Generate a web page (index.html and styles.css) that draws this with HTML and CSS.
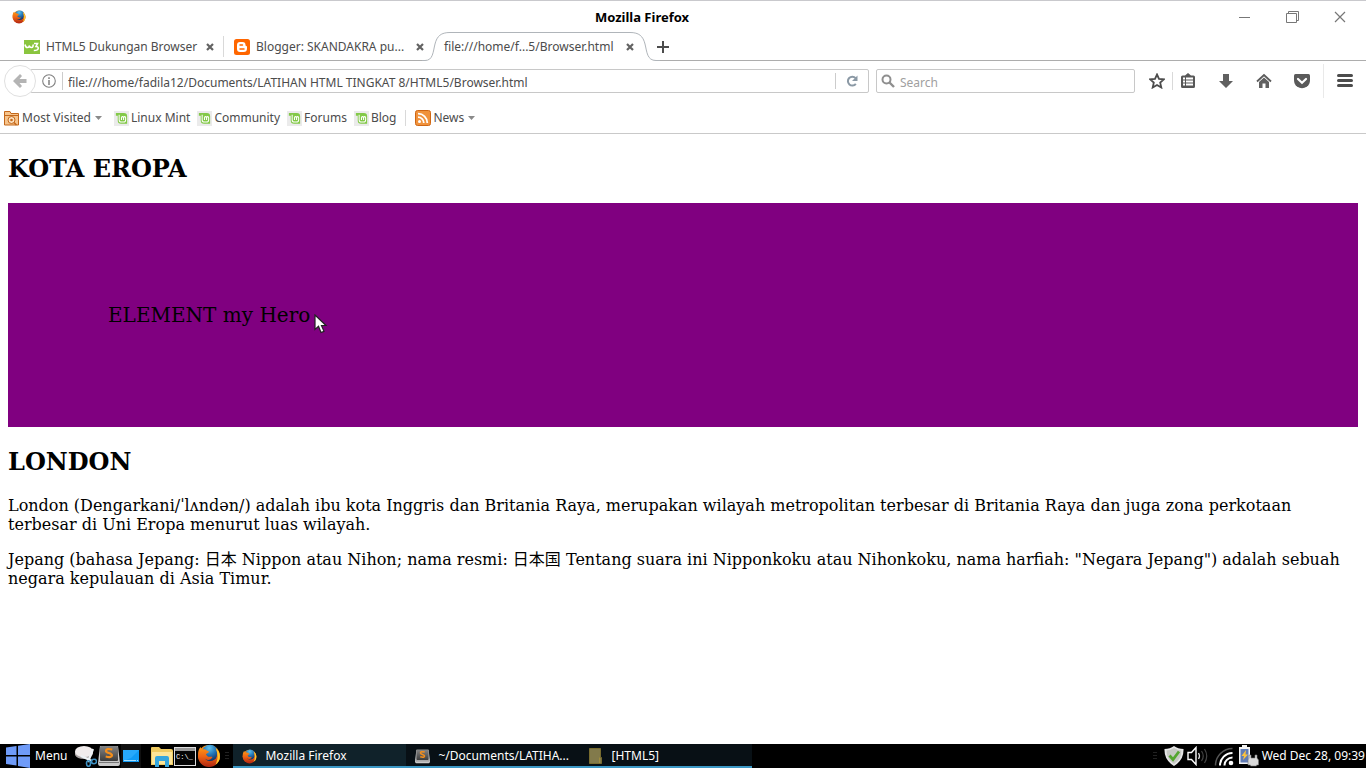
FILE: index.html
```html
<!DOCTYPE html>
<html lang="id">
<head>
    <meta charset="UTF-8">
    <meta name="viewport" content="width=device-width, initial-scale=1.0">
    <title>Mozilla Firefox</title>
    <link rel="stylesheet" href="styles.css">
</head>
<body>
    <!-- Shared icons -->
    <svg class="sprite" width="0" height="0" aria-hidden="true">
        <defs>
            <linearGradient id="foxBody" x1="0" y1="0" x2="0" y2="1">
                <stop offset="0" stop-color="#ff9a16"/>
                <stop offset="0.5" stop-color="#ee6414"/>
                <stop offset="1" stop-color="#b52a12"/>
            </linearGradient>
            <radialGradient id="foxGlobe" cx="0.45" cy="0.2" r="0.8">
                <stop offset="0" stop-color="#5fc3ee"/>
                <stop offset="0.5" stop-color="#2376b8"/>
                <stop offset="1" stop-color="#15305f"/>
            </radialGradient>
            <linearGradient id="metal" x1="0" y1="0" x2="0" y2="1">
                <stop offset="0" stop-color="#868686"/>
                <stop offset="1" stop-color="#3c3c3c"/>
            </linearGradient>
        </defs>
        <symbol id="firefox" viewBox="0 0 24 24">
            <circle cx="12" cy="12" r="11" fill="url(#foxBody)"/>
            <circle cx="13" cy="9" r="8.2" fill="url(#foxGlobe)"/>
            <path d="M1.200 9C1.300 6 2.500 4 3.600 3L4.600 5.500C6.500 5 8.500 5.300 9.800 6.500L12 7.600C12 9 9.400 9.400 8.900 10.600L10.500 12.200C12 13.600 14 12 15.500 13C13.800 16.800 9.400 16.500 8 14.500C9.500 18.500 17.500 18.500 19.500 13.500C20.800 10 20 6.500 18.600 4C22 6.500 23.500 10.500 22.600 15C20 24 4 25 1.400 14Z" fill="url(#foxBody)"/>
            <path d="M18.600 4C22 6.500 23.500 10.500 22.600 15C22 18 19.500 20 18.500 20.500C21.500 15 21 9 18.600 4Z" fill="#ffc829"/>
        </symbol>
        <symbol id="mint" viewBox="0 0 16 16">
            <rect width="16" height="16" fill="#ebebeb"/>
            <path d="M2 2H10.500Q14 2 14 5.500V13.500H7.500Q4 13.500 4 10V5H2Z" fill="#83c948"/>
            <path d="M5.500 4V9.500Q5.500 11.700 8 11.700H10Q12.400 11.700 12.400 9.500V7.200Q12.400 6 11.300 6T10.200 7.200V9.500M10.200 7.200Q10.200 6 9.100 6T8 7.200V9.500" fill="none" stroke="#fff" stroke-width="1.100"/>
        </symbol>
        <symbol id="close" viewBox="0 0 8 8">
            <path d="M1 1L7 7M7 1L1 7" stroke="#636363" stroke-width="2.200" fill="none"/>
        </symbol>
        <symbol id="sublime" viewBox="0 0 22 22">
            <path d="M2 1H20L22 18Q22 21 20 21H2Q0 21 0 18Z" fill="#c9c9c9"/>
            <rect x="2" y="1" width="18" height="15" rx="1" fill="url(#metal)"/>
            <path d="M1 17.500H21" stroke="#777" stroke-width="1"/>
            <path d="M14.300 4.500Q8 3 8 6C8 8.500 14 7.500 14 10.300Q14 13 7.700 11.500" fill="none" stroke="#f58f1b" stroke-width="2.200"/>
        </symbol>
    </svg>

    <!-- Window title -->
    <header class="titlebar">
        <div class="titlebar-icon"><svg width="14" height="14"><use href="#firefox"/></svg></div>
        <div class="titlebar-text">Mozilla Firefox</div>
        <div class="window-buttons">
            <button type="button" aria-label="Minimize"><svg width="14" height="14"><path d="M2 7.500H13" stroke="#777" fill="none"/></svg></button>
            <button type="button" aria-label="Restore"><svg width="14" height="14"><path d="M1.500 3.500H11.500V12.500H1.500ZM3.500 3.500V1.500H13.500V10.500H11.500" stroke="#777" fill="none"/></svg></button>
            <button type="button" aria-label="Close"><svg width="14" height="14"><path d="M2 2L12 12M12 2L2 12" stroke="#777" stroke-width="1.200" fill="none"/></svg></button>
        </div>
    </header>

    <!-- Tabs -->
    <nav class="tabs">
        <div class="tab tab-line">
            <svg width="16" height="16"><rect y="1" width="16" height="14" fill="#8ac53f"/><path d="M1 5.500Q1.500 8.500 3.500 8.500T5 6.500Q5.500 8.500 7.500 8.500T9 5.500M10 4.500H13.500L12 7.500Q14.500 7.500 14.200 9.500T9.800 11.500" fill="none" stroke="#fff" stroke-width="1.600"/></svg>
            <a href="#" class="tab-title">HTML5 Dukungan Browser</a>
            <button type="button" class="tab-close" aria-label="Close tab"><svg width="8" height="8"><use href="#close"/></svg></button>
        </div>
        <div class="tab">
            <svg width="16" height="16"><rect width="16" height="16" rx="2.500" fill="#f60"/><path d="M6 3H8.500Q11.500 3 11.500 6Q11.500 7 12.300 7Q13 7 13 8V9.500Q13 13 9.500 13H6Q3 13 3 10V6Q3 3 6 3Z" fill="#fff"/><path d="M6 6H8.500M6 10H10" stroke="#f60" stroke-width="1.500" stroke-linecap="round"/></svg>
            <a href="#" class="tab-title">Blogger: SKANDAKRA pu...</a>
            <button type="button" class="tab-close" aria-label="Close tab"><svg width="8" height="8"><use href="#close"/></svg></button>
        </div>
        <div class="tab tab-active">
            <svg class="tab-shape" width="238" height="29"><path d="M0 28.500H3C11 28.500 11 20 13 12C15 4 19 .5 28 .5H208C217 .5 221 4 223 12C225 20 225 28.500 234 28.500H238V30H0Z" fill="#fff"/><path d="M0 28.500H3C11 28.500 11 20 13 12C15 4 19 .5 28 .5H208C217 .5 221 4 223 12C225 20 225 28.500 234 28.500H238" fill="none" stroke="#b0b5ba"/></svg>
            <a href="#" class="tab-title">file:///home/f...5/Browser.html</a>
            <button type="button" class="tab-close" aria-label="Close tab"><svg width="8" height="8"><use href="#close"/></svg></button>
        </div>
        <div class="tab-rest">
            <button type="button" aria-label="New tab"><svg width="12" height="12"><path d="M6 0V12M0 6H12" stroke="#4c4c4c" stroke-width="2"/></svg></button>
        </div>
    </nav>

    <!-- Address bar -->
    <div class="toolbar">
        <button type="button" class="back" aria-label="Back"><svg width="16" height="16"><path d="M1 8L8 1L10 3L7.500 6H14.500V10H7.500L10 13L8 15Z" fill="#b4b4b4"/></svg></button>
        <div class="url-box">
            <svg width="14" height="14"><circle cx="7" cy="7" r="6.300" fill="none" stroke="#808080" stroke-width="1.100"/><path d="M7 6V11M7 3.300V5" stroke="#808080" stroke-width="1.500"/></svg>
            <input type="text" class="url" aria-label="Address" value="file:///home/fadila12/Documents/LATIHAN HTML TINGKAT 8/HTML5/Browser.html">
            <button type="button" class="reload" aria-label="Reload"><svg width="12" height="12"><path d="M9.600 3.200A4.400 4.400 0 1 0 9.800 8.800" fill="none" stroke="#8b99a5" stroke-width="2"/><path d="M11.500 .5V6H6Z" fill="#8b99a5"/></svg></button>
        </div>
        <div class="search-box">
            <svg width="14" height="14"><circle cx="5.500" cy="5.500" r="4" fill="none" stroke="#8f8f8f" stroke-width="2"/><path d="M8.500 8.500L13 13" stroke="#8f8f8f" stroke-width="2.400"/></svg>
            <input type="search" aria-label="Search" placeholder="Search">
        </div>
        <div class="tools">
            <button type="button" class="tool-star" aria-label="Bookmark this page"><svg width="16" height="16"><path d="M8 1.500L10 5.800L14.800 6.300L11.200 9.600L12.300 14.500L8 12L3.700 14.500L4.800 9.600L1.200 6.300L6 5.800Z" fill="none" stroke="#4c4c4c" stroke-width="1.800"/></svg></button>
            <button type="button" class="tool-list" aria-label="Bookmarks"><svg width="16" height="16"><path d="M5 2.500L8 0L11 2.500H13.500Q15 2.500 15 4V13.500Q15 15 13.500 15H2.500Q1 15 1 13.500V4Q1 2.500 2.500 2.500Z" fill="#575757"/><path d="M3 5.500H5M6 5.500H13M3 8.500H5M6 8.500H13M3 11.500H5M6 11.500H13" stroke="#fff" stroke-width="2"/></svg></button>
            <button type="button" aria-label="Downloads"><svg width="16" height="16"><path d="M5 1H11V8H15L8 15L1 8H5Z" fill="#606060"/></svg></button>
            <button type="button" aria-label="Home"><svg width="16" height="16"><path d="M1 8.500L8 2L15 8.500" fill="none" stroke="#5c5c5c" stroke-width="1.800"/><path d="M3 9L8 4.600L13 9V15H9.500V10.500H6.500V15H3Z" fill="#606060"/></svg></button>
            <button type="button" aria-label="Pocket"><svg width="16" height="16"><path d="M1.500 1H14.500Q16 1 16 2.500V7Q16 11 13 13.500Q8 17 3 13.500Q0 11 0 7V2.500Q0 1 1.500 1Z" fill="#5a5a5a"/><path d="M4 6L8 9.800L12 6" fill="none" stroke="#fff" stroke-width="2.200" stroke-linecap="round"/></svg></button>
            <button type="button" class="tool-menu" aria-label="Menu"><svg width="16" height="16"><path d="M1.500 2.500H14.500M1.500 7.500H14.500M1.500 12.500H14.500" stroke="#4c4c4c" stroke-width="3" stroke-linecap="round"/></svg></button>
        </div>
    </div>

    <!-- Bookmarks -->
    <nav class="bookmarks">
        <a href="#" class="most-visited">
            <svg width="16" height="16"><path d="M.5 1.500H6L7 3.500H14.500V15H.5Z" fill="#f6c48c" stroke="#c4681b"/><path d="M1 5.500H14" stroke="#c4681b"/><circle cx="7.500" cy="10" r="3.500" fill="#fbe2c2" stroke="#c4681b"/><circle cx="7.500" cy="10" r="1.300" fill="#c4681b"/><path d="M10 12.500L12.500 15" stroke="#c4681b" stroke-width="1.500"/></svg>
            Most Visited
            <svg class="caret" width="7" height="4"><path d="M0 0H7L3.500 4Z" fill="#8a8a8a"/></svg>
        </a>
        <a href="#"><svg width="15" height="15"><use href="#mint"/></svg>Linux Mint</a>
        <a href="#"><svg width="15" height="15"><use href="#mint"/></svg>Community</a>
        <a href="#"><svg width="15" height="15"><use href="#mint"/></svg>Forums</a>
        <a href="#"><svg width="15" height="15"><use href="#mint"/></svg>Blog</a>
        <a href="#" class="news">
            <svg width="16" height="16"><rect x="0.500" y="0.500" width="15" height="15" rx="2" fill="#f0923c" stroke="#cf6714"/><circle cx="4.500" cy="11.500" r="1.500" fill="#fff"/><path d="M3 7.200A5.800 5.800 0 0 1 8.800 13M3 3.700A9.300 9.300 0 0 1 12.300 13" fill="none" stroke="#fff" stroke-width="1.800"/></svg>
            News
            <svg class="caret" width="7" height="4"><path d="M0 0H7L3.500 4Z" fill="#8a8a8a"/></svg>
        </a>
    </nav>

    <!-- Page -->
    <main class="page">
        <h2>KOTA EROPA</h2>
        <div class="hero">
            <span class="hero-text">ELEMENT my Hero
                <svg class="cursor" width="14" height="21"><path d="M1 1V15.500L4.500 12.300L7 18.500L10 17.300L7.500 11.500H12Z" fill="#fff" stroke="#222" stroke-width="1.200"/></svg>
            </span>
        </div>
        <h2>LONDON</h2>
        <p>London (Dengarkani/ˈlʌndən/) adalah ibu kota Inggris dan Britania Raya, merupakan wilayah metropolitan terbesar di Britania Raya dan juga zona perkotaan terbesar di Uni Eropa menurut luas wilayah.</p>
        <p>Jepang (bahasa Jepang: 日本 Nippon atau Nihon; nama resmi: 日本国 Tentang suara ini Nipponkoku atau Nihonkoku, nama harfiah: "Negara Jepang") adalah sebuah negara kepulauan di Asia Timur.</p>
    </main>

    <!-- Taskbar -->
    <footer class="taskbar">
        <button type="button" class="start">
            <svg width="24" height="24"><path d="M0 3.500L10.500 2V11H0ZM12 1.800L24 0V11H12ZM0 12.500H10.500V21.500L0 20ZM12 12.500H24V24L12 22Z" fill="#6f9bf8"/></svg>
            Menu
        </button>
        <div class="launchers">
            <button type="button" aria-label="Screenshot"><svg width="22" height="22"><path d="M0 7V10Q2 14 9 14T18 9V6Z" fill="#a9a3a3"/><ellipse cx="9" cy="6.500" rx="9" ry="5.500" fill="#f1ecec"/><path d="M6 11L17 16M18 4L13 17" stroke="#eef3f6" stroke-width="2.200"/><ellipse cx="13.500" cy="18.500" rx="2" ry="2.800" fill="none" stroke="#3d8fc0" stroke-width="1.600"/><ellipse cx="19" cy="16.500" rx="2.500" ry="2.200" fill="none" stroke="#3d8fc0" stroke-width="1.600"/></svg></button>
            <button type="button" aria-label="Sublime Text"><svg width="22" height="22"><use href="#sublime"/></svg></button>
            <button type="button" class="desktop" aria-label="Show desktop"><svg width="16" height="12"><rect width="16" height="12" fill="#109bf5"/><path d="M0 0H16L8 8L0 11Z" fill="#27a9fb"/><path d="M1 10.500H13M14 10.500H15" stroke="#a8e0ff"/></svg></button>
            <button type="button" class="files" aria-label="Files"><svg width="22" height="22"><path d="M0 3Q0 2 1 2H8L10 4H20Q22 4 22 6V20H0Z" fill="#efca60"/><path d="M1 7H21V19H1Z" fill="#fce498"/><path d="M4 22V13Q4 11 6 11H16Q18 11 18 13V22H14V16H8V22Z" fill="#35a5dc"/></svg></button>
            <button type="button" aria-label="Terminal"><svg width="22" height="22"><rect x="0.500" y="2.500" width="21" height="18" fill="#050505" stroke="#ddd"/><path d="M1 4.500H21" stroke="#999" stroke-width="3"/><text class="prompt" x="2" y="14">C:\_</text></svg></button>
            <button type="button" aria-label="Firefox"><svg width="24" height="24"><use href="#firefox"/></svg></button>
        </div>
        <svg class="grip" width="4" height="8"><path d="M0 .5H4M0 3.500H4M0 6.500H4" stroke="#222"/></svg>
        <div class="tasks">
            <button type="button" class="task task-active"><svg width="15" height="15"><use href="#firefox"/></svg>Mozilla Firefox</button>
            <button type="button" class="task"><svg width="15" height="15"><use href="#sublime"/></svg>~/Documents/LATIHA...</button>
            <button type="button" class="task"><svg width="15" height="16"><path d="M1.500 .5H12.500V9.500H13.500V15.500H1.500Z" fill="#827a4b" stroke="#776b2e"/><path d="M11.500 15V9.500" stroke="#a08e3e"/></svg>[HTML5]</button>
        </div>
        <div class="tray">
            <svg class="grip" width="4" height="8"><path d="M0 .5H4M0 3.500H4M0 6.500H4" stroke="#222"/></svg>
            <svg width="20" height="20"><path d="M10 0Q14 3 19.500 3Q20 14 10 20Q0 14 .5 3Q6 3 10 0Z" fill="#e6e6e6"/><path d="M10 2Q13.500 4.300 17.500 4.500Q17.500 13.500 10 18Q2.500 13.500 2.500 4.500Q6.500 4.300 10 2Z" fill="#c7c9c4"/><path d="M5.500 9.500L9 13.500L15 5.500" fill="none" stroke="#55a630" stroke-width="2.800"/></svg>
            <svg width="22" height="20"><path d="M1 6.500H4.500L9 1.500V18.500L4.500 13.500H1Z" fill="none" stroke="#fff" stroke-width="1.400"/><path d="M11.500 7Q13.500 10 11.500 13" fill="none" stroke="#ddd" stroke-width="1.300"/><path d="M14.500 5Q18 10 14.500 15M17.500 3Q22 10 17.500 17" fill="none" stroke="#444" stroke-width="1.200"/></svg>
            <svg class="wifi" width="20" height="20"><circle cx="17" cy="17" r="2.300" fill="#fff"/><path d="M10.500 19.500A8 8 0 0 1 18.500 11.500M6 19.500A12.500 12.500 0 0 1 18.500 7" fill="none" stroke="#fff" stroke-width="2"/><path d="M1.500 19.500A17 17 0 0 1 18.500 2.500" fill="none" stroke="#555" stroke-width="1.500"/></svg>
            <svg width="22" height="22"><path d="M5 0H10V2H13V19H2V2H5Z" fill="#f4f4f4"/><rect x="3.500" y="4" width="8" height="13.500" fill="#617cb5"/><path d="M9 5L4.500 11H7L6 15L11 9.500H8.500Z" fill="#ffc33b"/><path d="M12 13V10H14V13H18V10H20V13L21.500 15V20H19.500V21H13.500V20H11V15Z" fill="#dadada" stroke="#777" stroke-width="0.600"/></svg>
            <span class="clock">Wed Dec 28, 09:39</span>
        </div>
    </footer>
</body>
</html>
```
FILE: styles.css
```css
/* General Styles */
* {
    box-sizing: border-box;
}

body {
    margin: 0;
    min-height: 100vh;
    display: flex;
    flex-direction: column;
    background-color: #ffffff;
    color: #4c4c4c;
    font-family: "Noto Sans", sans-serif;
    font-size: 12px;
    line-height: 16px;
}

button,
input {
    font: inherit;
    color: inherit;
    background: none;
    border: none;
    padding: 0;
    margin: 0;
}

button {
    display: flex;
    align-items: center;
    justify-content: center;
}

input {
    min-width: 0;
    flex: 1;
    outline: none;
}

a {
    color: inherit;
    text-decoration: none;
}

svg {
    display: block;
    flex-shrink: 0;
}

.sprite {
    position: absolute;
}

/* Title bar */
.titlebar {
    display: flex;
    align-items: center;
    height: 32px;
    border-top: 1px solid #c9c9cd;
}

.titlebar-icon {
    width: 64px;
    padding-left: 12px;
}

.titlebar-text {
    flex: 1;
    text-align: center;
    font-size: 13px;
    font-weight: bold;
    color: #000000;
}

.window-buttons {
    display: flex;
    margin-right: 2px;
}

.window-buttons button {
    width: 48px;
    height: 24px;
}

/* Tabs */
.tabs {
    display: flex;
    height: 29px;
    padding-left: 14px;
    background: linear-gradient(#adadad, #adadad) bottom / 100% 1px no-repeat;
}

.tab {
    display: flex;
    align-items: center;
    gap: 6px;
    width: 210px;
    padding: 0 10px;
}

.tab-line {
    background: linear-gradient(#d9d9d9, #d9d9d9) right 4px / 1px 21px no-repeat;
}

.tab-title {
    flex: 1;
    white-space: nowrap;
}

.tab-active {
    position: relative;
}

.tab-shape {
    position: absolute;
    left: -12px;
    top: 0;
}

.tab-active .tab-title,
.tab-active .tab-close {
    z-index: 1;
}

.tab-rest {
    display: flex;
    align-items: center;
    padding-left: 13px;
}

/* Address bar */
.toolbar {
    display: flex;
    align-items: center;
    height: 40px;
    padding-left: 4px;
}

.back {
    width: 32px;
    height: 32px;
    border: 1px solid #e0e0e0;
    border-radius: 50%;
    background-color: #ffffff;
    z-index: 1;
}

.url-box,
.search-box {
    display: flex;
    align-items: center;
    height: 24px;
    border: 1px solid #c8c8c8;
    border-radius: 2px;
}

.url-box {
    flex: 1;
    margin-left: -6px;
    padding-left: 11px;
}

.url-box input,
.search-box input {
    height: 18px;
    padding-top: 2px;
}

.url-box .url {
    margin-left: 6px;
    padding-left: 5px;
    border-left: 1px solid #cccccc;
}

.reload {
    width: 33px;
    height: 16px;
    border-left: 1px solid #cccccc;
}

.search-box {
    width: 259px;
    margin-left: 7px;
    padding-left: 4px;
    gap: 5px;
}

.search-box input::placeholder {
    color: #a0a0a0;
    opacity: 1;
}

.tools {
    display: flex;
    align-items: center;
    margin-left: 7px;
}

.tools button {
    width: 38px;
    height: 34px;
}

.tools .tool-star {
    width: 31px;
    height: 18px;
    border-right: 1px solid #d9d9d9;
}

.tools .tool-list {
    width: 30px;
    margin-right: 4px;
}

.tools .tool-menu {
    width: 43px;
    margin-left: 2px;
    border-left: 1px solid #e9e9e9;
}

/* Bookmarks */
.bookmarks {
    display: flex;
    align-items: center;
    gap: 7px;
    height: 33px;
    padding: 2px 0 0 4px;
    border-bottom: 1px solid #c9c9c9;
}

.bookmarks a {
    display: flex;
    align-items: center;
    gap: 2px;
}

.bookmarks .most-visited {
    margin-right: 5px;
}

.caret {
    margin-left: 2px;
}

.bookmarks .news {
    margin-left: 2px;
    padding-left: 9px;
    border-left: 1px solid #d9d9d9;
}

/* Page */
.page {
    flex: 1;
    padding: 0 8px;
    color: #000000;
    font-family: "DejaVu Serif", "Noto Sans CJK JP", serif;
    font-size: 16px;
    line-height: 19px;
}

.page h2 {
    margin: 20px 0;
    font-size: 24px;
    line-height: 29px;
}

.page p {
    margin: 0 0 16px;
}

.hero {
    padding: 100px;
    background-color: purple;
    font-size: 20px;
    line-height: 24px;
}

.hero-text {
    position: relative;
}

.cursor {
    position: absolute;
    left: 100%;
    top: 11px;
    margin-left: 4px;
}

/* Taskbar */
.taskbar {
    display: flex;
    align-items: center;
    height: 24px;
    padding: 0 1px 0 6px;
    background-color: #000000;
    color: #ffffff;
}

.start {
    gap: 5px;
    margin-right: 8px;
}

.launchers {
    display: flex;
    align-items: center;
    gap: 1px;
}

.desktop {
    width: 20px;
    height: 24px;
    background-color: #101010;
}

.files {
    margin-left: 9px;
}

.prompt {
    font-family: "Liberation Mono", monospace;
    font-size: 7px;
    fill: #ffffff;
}

.grip {
    margin: 0 4px;
}

.tasks {
    display: flex;
}

.task {
    justify-content: flex-start;
    gap: 8px;
    width: 173px;
    height: 24px;
    padding: 2px 9px 0;
    border-bottom: 2px solid #3b98c5;
    background-color: #081015;
    white-space: nowrap;
}

.task-active {
    background-color: #10222a;
}

.tray {
    display: flex;
    align-items: center;
    gap: 3px;
    margin-left: auto;
}

.wifi {
    margin-left: 2px;
}

.clock {
    white-space: nowrap;
}
```
